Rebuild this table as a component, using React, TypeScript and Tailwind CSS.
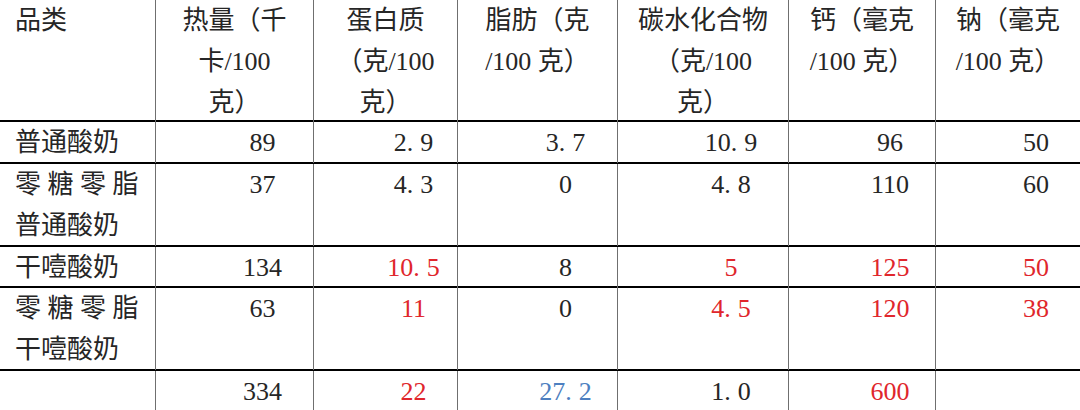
import React from "react"

type Cell = { v: string; c?: "red" | "blue" }

const COLS = "grid-cols-[155px_158px_144px_160px_171px_147px_145px]"

const headers: string[][] = [
    ["热量（千", "卡/100", "克）"],
    ["蛋白质", "（克/100", "克）"],
    ["脂肪（克", "/100 克）"],
    ["碳水化合物", "（克/100", "克）"],
    ["钙（毫克", "/100 克）"],
    ["钠（毫克", "/100 克）"],
]

const rows: { name: string[]; h: string; cells: Cell[] }[] = [
    {
        name: ["普通酸奶"],
        h: "h-[42px]",
        cells: [{ v: "89" }, { v: "2.9" }, { v: "3.7" }, { v: "10.9" }, { v: "96" }, { v: "50" }],
    },
    {
        name: ["零糖零脂", "普通酸奶"],
        h: "h-[83px]",
        cells: [{ v: "37" }, { v: "4.3" }, { v: "0" }, { v: "4.8" }, { v: "110" }, { v: "60" }],
    },
    {
        name: ["干噎酸奶"],
        h: "h-[41px]",
        cells: [
            { v: "134" },
            { v: "10.5", c: "red" },
            { v: "8" },
            { v: "5", c: "red" },
            { v: "125", c: "red" },
            { v: "50", c: "red" },
        ],
    },
    {
        name: ["零糖零脂", "干噎酸奶"],
        h: "h-[83px]",
        cells: [
            { v: "63" },
            { v: "11", c: "red" },
            { v: "0" },
            { v: "4.5", c: "red" },
            { v: "120", c: "red" },
            { v: "38", c: "red" },
        ],
    },
    {
        name: [],
        h: "h-[42px]",
        cells: [
            { v: "334" },
            { v: "22", c: "red" },
            { v: "27.2", c: "blue" },
            { v: "1.0" },
            { v: "600", c: "red" },
            { v: "" },
        ],
    },
]

function Num({ v }: { v: string }) {
    const parts = v.split(".")
    if (parts.length < 2) return <>{v}</>
    return (
        <>
            {parts[0]}
            <span className="pr-[7px]">.</span>
            {parts[1]}
        </>
    )
}

export default function App() {
    return (
        <div className="w-[1080px] h-[410px] overflow-hidden bg-white text-[#262626] text-[26px] leading-[41px] font-['Liberation_Serif','Noto_Sans_CJK_SC',serif]">
            {/* header */}
            <div className={`grid ${COLS} h-[122px] border-b-2 border-black`}>
                <div className="pl-[15px]">品类</div>
                {headers.map((lines, i) => (
                    <div key={i} className="border-l border-[#6f6f6f] text-center">
                        {lines.map((l, j) => (
                            <div key={j}>{l}</div>
                        ))}
                    </div>
                ))}
            </div>

            {rows.map((r, i) => (
                <div key={i} className={`grid ${COLS} ${r.h} border-b-2 border-black`}>
                    <div className="pl-[15px]">
                        {r.name.map((n, j) =>
                            r.name.length > 1 && j === 0 ? (
                                <div key={j} className="tracking-[6.5px]">{n}</div>
                            ) : (
                                <div key={j}>{n}</div>
                            )
                        )}
                    </div>
                    {r.cells.map((c, j) => (
                        <div
                            key={j}
                            className={`border-l border-[#6f6f6f] pl-[56px] text-center ${c.c === "red" ? "text-[#e0262c]" : c.c === "blue" ? "text-[#4d7fc0]" : ""}`}
                        >
                            <Num v={c.v} />
                        </div>
                    ))}
                </div>
            ))}
        </div>
    )
}
